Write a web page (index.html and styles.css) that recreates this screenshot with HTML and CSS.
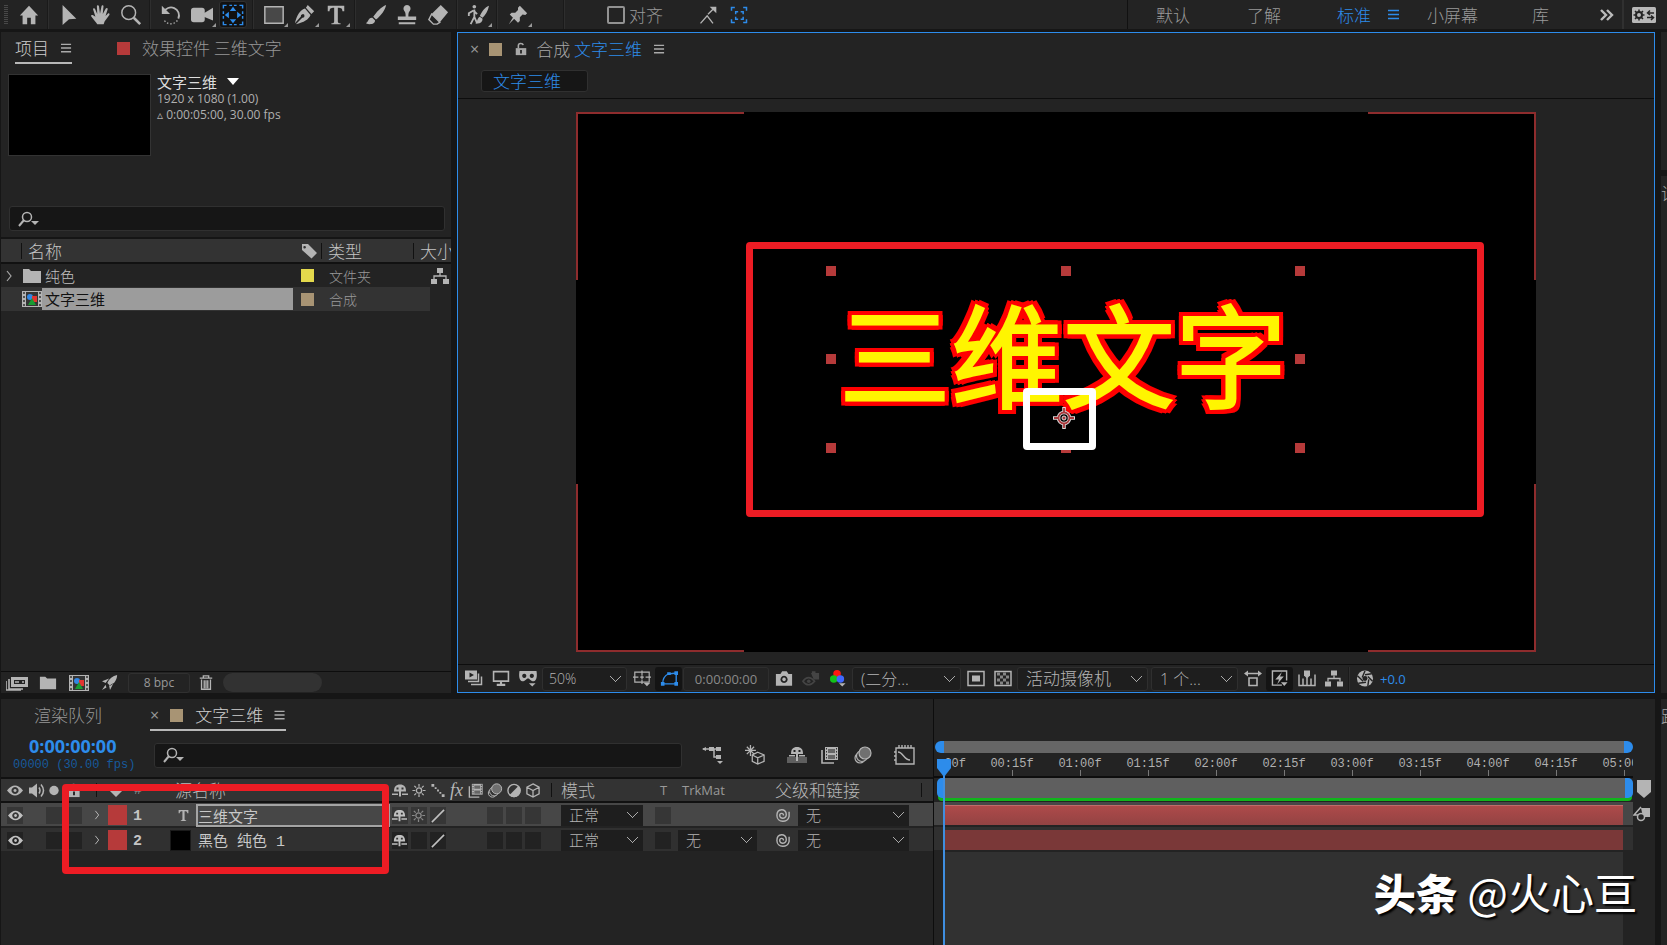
FILE: index.html
```html
<!DOCTYPE html>
<html lang="zh-CN">
<head>
<meta charset="utf-8">
<title>文字三维</title>
<link rel="stylesheet" href="styles.css">
</head>
<body>
<svg class="sprite" aria-hidden="true">
  <symbol id="home" viewBox="0 0 24 24"><path d="M12 2 22 12.500h-3V22h-5v-7h-4v7H5v-9.500H2z"/></symbol>
  <symbol id="arrow" viewBox="0 0 24 24"><path d="M5 1 20 16l-8 .6L5 23z"/></symbol>
  <symbol id="hand" viewBox="0 0 24 24"><path d="M9 22c-1-2-4-5-6.500-8.500-.8-1.200.8-2 2-1.100L7 14 4.500 6c-.4-1.500 1.600-2.100 2.100-.6L9 11 8.600 2.600c0-1.500 2.100-1.600 2.300-.1L12 10.500l1.700-8.300c.3-1.400 2.300-1.100 2.100.4L15 11l3.300-6c.8-1.300 2.500-.5 2 .9L18 13l2.500-2.500c1.200-1 2.500.3 1.700 1.500L17 19l-1 3z"/></symbol>
  <symbol id="zoom" viewBox="0 0 24 24"><g fill="none" stroke="currentColor"><circle cx="9.500" cy="9.500" r="7.500" stroke-width="1.600"/><path d="m15 15 7 7" stroke-width="2.800"/></g></symbol>
  <symbol id="rotate" viewBox="0 0 24 24"><path d="M4 9a8.500 8.500 0 1 1 16 7" fill="none" stroke="currentColor" stroke-width="2"/><path d="M2 2v9h9z"/><path d="M19 18c-4 5-11 5-15-1" fill="none" stroke="currentColor" stroke-width="1.500" stroke-dasharray="1.500 2.200"/></symbol>
  <symbol id="camera" viewBox="0 0 24 24"><rect x="0" y="4" width="15" height="16" rx="3"/><path d="M14 10 24 4v14l-10-4z"/></symbol>
  <symbol id="anchor" viewBox="0 0 24 24"><path d="M1.500 5V1.500H5m3 0h3m2 0h3m3 0h3.500V5m0 3v3m0 2v3m0 3v3.500H19m-3 0h-3m-2 0H8m-3 0H1.500V19m0-3v-3m0-2V8" fill="none" stroke="currentColor" stroke-width="1.600"/><path d="m12 3 3.500 4.500h-7zM12 21l3.500-4.500h-7zM3 12l4.500-3.500v7zM21 12l-4.500-3.500v7z"/></symbol>
  <symbol id="rect" viewBox="0 0 24 24"><path d="M2 3h20v18H2z" fill="#484848" stroke="currentColor" stroke-width="1.600"/></symbol>
  <symbol id="pen" viewBox="0 0 24 24"><path d="m15 1 7 7-3 3-6-7zM12 5l6 7c-2 5-7 8-16 10l7-7a2 2 0 1 0-1.500-1.500L1 21C3 13 6 7 12 5z"/></symbol>
  <symbol id="type" viewBox="0 0 24 24"><path d="M3 2h18v6h-2c0-3-1-4-5-4v15c0 1.500 1 2 3 2v1H7v-1c2 0 3-.5 3-2V4C6 4 5 5 5 8H3z"/></symbol>
  <symbol id="brush" viewBox="0 0 24 24"><path d="M23 1c-5 2-11 8-14 13l3 3C17 13 22 7 23 1zM8 15c-4-.5-4 4-7 6 4 2 10 1 10-3z"/></symbol>
  <symbol id="stamp" viewBox="0 0 24 24"><path d="M12 1a4 4 0 0 1 3 6.500c-1.500 1.500-1.500 3.500-1.500 6H22v4H2v-4h8.500c0-2.500 0-4.500-1.500-6A4 4 0 0 1 12 1zM3 20h18v2H3z"/></symbol>
  <symbol id="eraser" viewBox="0 0 24 24"><path d="m15 1 8 8-9 11-9-9z"/><path d="m5 11 9 9-3 2H7l-5-5z" fill="none" stroke="currentColor" stroke-width="1.500"/></symbol>
  <symbol id="roto" viewBox="0 0 24 24"><circle cx="8" cy="3" r="2"/><path d="m7 7-5 3v3m5-6 4 4M8 6v8l-4 8m4-8 3 7" fill="none" stroke="currentColor" stroke-width="2"/><path d="M24 2c-5 2-8 7-10 11l3 2c3-3 6-7 7-13zM14 14c-3 1-2 5-5 7 5 1 8-1 8-5z"/></symbol>
  <symbol id="pin" viewBox="0 0 24 24"><path d="m14 2 8 8-2 2-3-.5-3 3v4l-2 2-9-9 2-2h4l3-3V4zM9 15l-7 7 5.500-9z"/></symbol>
  <symbol id="snapline" viewBox="0 0 24 24"><path d="m3 22 8-9 7 9M12 11l6-6" fill="none" stroke="currentColor" stroke-width="1.600"/><path d="M14 2h8v8z"/></symbol>
  <symbol id="snapbox" viewBox="0 0 24 24"><path d="M3 7V3h4m10 0h4v4m0 10v4h-4M7 21H3v-4M8 11V8h3m3 0h3v3m0 3v3h-3m-3 0H8v-3" fill="none" stroke="currentColor" stroke-width="1.800"/></symbol>
  <symbol id="menu" viewBox="0 0 12 12"><path d="M0 1.500h11M0 5.500h11M0 9.500h11" fill="none" stroke="currentColor" stroke-width="1.500"/></symbol>
  <symbol id="more" viewBox="0 0 16 16"><path d="m2 3 5 5-5 5m6-10 5 5-5 5" fill="none" stroke="currentColor" stroke-width="2.400"/></symbol>
  <symbol id="prefs" viewBox="0 0 24 16"><rect width="24" height="16" rx="1.500"/><circle cx="7" cy="8" r="3" fill="none" stroke="#232323" stroke-width="2"/><path d="M7 2.500v2m0 7v2M1.500 8h2m7 0h2M3 4l1.500 1.500M11 4 9.500 5.500M3 12l1.500-1.500M11 12l-1.500-1.500M22 6h-6m2-2.500L15.500 6 18 8M15 10.500h6m-2-2 2.500 2-2.500 2.500" fill="none" stroke="#232323" stroke-width="1.500"/></symbol>
  <symbol id="lock" viewBox="0 0 16 16"><path d="M2 7h12v8H2z"/><path d="M5 7V4c0-3 5-3 5.500-.5" fill="none" stroke="currentColor" stroke-width="1.800"/><path d="M7 9h2v4H7z" fill="#222"/></symbol>
  <symbol id="search" viewBox="0 0 24 16"><g fill="none" stroke="currentColor"><circle cx="9" cy="6" r="4.500" stroke-width="1.500"/><path d="m6 9-5 6" stroke-width="2"/></g><path d="M13 10h8l-4 4z"/></symbol>
  <symbol id="tag" viewBox="0 0 16 16"><path d="M1 1h6l9 9-5.500 5.500L1 7zM4 3a1.300 1.300 0 1 0 0 2.500A1.300 1.300 0 0 0 4 3z" fill-rule="evenodd"/></symbol>
  <symbol id="tagdown" viewBox="0 0 16 16"><path d="M5 1h6l5 6-8 8-8-8zM8 2.500a1.300 1.300 0 1 0 .1 0z" fill-rule="evenodd"/></symbol>
  <symbol id="folder" viewBox="0 0 20 16"><path d="M1 1h6l2 2h10v12H1z"/></symbol>
  <symbol id="comp" viewBox="0 0 20 16"><path d="M0 0h20v16H0z"/><path d="M4 1h12v14H4z" fill="#343434"/><path d="M2 1v15M18 1v15" stroke="#333" stroke-width="1.500" stroke-dasharray="2 2"/><circle cx="8" cy="6" r="3" fill="#3287e4"/><path d="M10 5h5v6h-5z" fill="#e23430"/><path d="m10 7 4 7H6z" fill="#199b31"/></symbol>
  <symbol id="tree" viewBox="0 0 18 16"><path d="M6 0h6v5H6zM0 11h6v5H0zM12 11h6v5h-6z"/><path d="M9 5v3M3 11V8h12v3" fill="none" stroke="currentColor" stroke-width="1.300"/></symbol>
  <symbol id="footage" viewBox="0 0 22 16"><path d="M5 2h17v10H5z"/><path d="M8 5h11v4H8z" fill="#242424"/><path d="M9 7h4m3 0h2" stroke="currentColor" stroke-width="1.500"/><path d="M3 4v10h14M0 6v9h15" fill="none" stroke="currentColor" stroke-width="1.600"/></symbol>
  <symbol id="rocket" viewBox="0 0 18 18"><path d="M17 0c-5 1-9 4-11 9l3 3c5-2 8-7 8-12zM8 4 0 7l4 2zM13 9l-4 8-1-5zM4 11l-4 6 5-3z"/></symbol>
  <symbol id="trash" viewBox="0 0 16 18"><path d="M1 3.500h14M5 3V1h6v2M3 5v11h10V5M6 6v9m2-9v9m2-9v9" fill="none" stroke="currentColor" stroke-width="1.500"/></symbol>
  <symbol id="render" viewBox="0 0 18 16"><path d="M0 0h12v9H0z"/><path d="M4.500 2v5L9 4.500z" fill="#222"/><path d="M13.500 3v8H3M16.500 6v8H6" fill="none" stroke="currentColor" stroke-width="1.500"/></symbol>
  <symbol id="monitor" viewBox="0 0 16 16"><path d="M1 1.500h14v9H1z" fill="none" stroke="currentColor" stroke-width="1.500"/><path d="M7 11h2v2h3v2H4v-2h3z"/></symbol>
  <symbol id="mask" viewBox="0 0 20 18"><path d="M1 1h18c1 6 0 10-3 11-3 0-4-3-6-3s-3 3-6 3C1 11 0 7 1 1zM6 4a2.200 2.200 0 1 0 .1 0zM14 4a2.200 2.200 0 1 0 .1 0z" fill-rule="evenodd"/><path d="M11 14h7l-3.500 3.500z"/></symbol>
  <symbol id="grid" viewBox="0 0 20 18"><path d="M2 2h16v11H2zM10 0v5m0 5v5M0 7.500h6m8 0h6M8 7.500h4M10 5.500v4" fill="none" stroke="currentColor" stroke-width="1.300"/><path d="M12 14h7l-3.500 3.500z"/></symbol>
  <symbol id="shape" viewBox="0 0 20 18"><path d="M3 15c0-5 2-9 6-11l9-1v12z" fill="none" stroke="currentColor" stroke-width="1.500"/><path d="M1 13h4v4H1zM8 2h4v3H8zM16 1h4v4h-4zM16 13h4v4h-4z"/></symbol>
  <symbol id="photo" viewBox="0 0 20 16"><path d="M1 3h5l2-3h5l2 3h4v13H1zM10 5a4 4 0 1 0 .1 0zM10 7a2 2 0 1 0 .1 0z" fill-rule="evenodd"/></symbol>
  <symbol id="ghost" viewBox="0 0 20 18"><path d="M1 12q6-8 13 0-7 8-13 0z" fill="none" stroke="currentColor" stroke-width="1.800"/><circle cx="7.500" cy="12" r="2"/><path d="M10 3h9v7h-6zM11 1h4v2h-4z"/></symbol>
  <symbol id="rgb" viewBox="0 0 18 18"><circle cx="8" cy="4" r="4" fill="#ff1712"/><circle cx="4.500" cy="9.500" r="4" fill="#13c11a"/><circle cx="11.500" cy="9.500" r="4" fill="#4068ff"/><path d="M10 14h7l-3.500 3.500z"/></symbol>
  <symbol id="roi" viewBox="0 0 18 16"><path d="M1 1h16v14H1z" fill="none" stroke="currentColor" stroke-width="1.500"/><path d="M5 5h8v6H5z"/></symbol>
  <symbol id="checker" viewBox="0 0 18 16"><path d="M1 1h16v14H1z" fill="none" stroke="currentColor" stroke-width="1.500"/><path d="M3 2h3v3H3zM9 2h3v3H9zM6 5h3v3H6zM12 5h3v3h-3zM3 8h3v3H3zM9 8h3v3H9zM6 11h3v3H6zM12 11h3v3h-3z" fill="#858585"/></symbol>
  <symbol id="aspect" viewBox="0 0 18 16"><path d="M5 7.500h8V15H5zM2 3h14" fill="none" stroke="currentColor" stroke-width="1.600"/><path d="m0 3 4-3v6zM18 3l-4-3v6z"/></symbol>
  <symbol id="fast" viewBox="0 0 18 18"><path d="M16 11V1H1v15h10" fill="none" stroke="currentColor" stroke-width="1.500"/><path d="m11 2-7 8h4l-2 5 7-8H9zM10 13h7l-3.500 4z"/></symbol>
  <symbol id="timeline" viewBox="0 0 18 16"><path d="M1 4v11h16V4M5 8v7m4-8v8m4-7v7" fill="none" stroke="currentColor" stroke-width="1.500"/><path d="M6 0h6v5L9 8 6 5z"/></symbol>
  <symbol id="aperture" viewBox="0 0 18 18"><circle cx="9" cy="9" r="8.500"/><path d="M9 1 6 8m10-4-7 1m8 7-5-5m0 10 1-7M2 14l8-1M1 6l6 6" stroke="#232323" stroke-width="1.500"/><circle cx="9" cy="9" r="2.600" fill="#232323"/></symbol>
  <symbol id="flow" viewBox="0 0 22 18"><path d="M1 3h8m0 0h9M12 3v8h5" fill="none" stroke="currentColor" stroke-width="1.500"/><path d="m0 3 4-2v4zM7 1h5v4H7zM14 1h5v4h-5zM14 9h5v4h-5zM15 15h6l-3 3z"/></symbol>
  <symbol id="draft" viewBox="0 0 22 22"><path d="m14 8 7 3v7l-7 3-6-3v-7zM8 11l6 3 7-3M14 14v7M6 0v12M0 6h12M2 2l8 8m0-8-8 8" fill="none" stroke="currentColor" stroke-width="1.400"/></symbol>
  <symbol id="shy" viewBox="0 0 16 14"><path d="M2 8C2 3 4 1 8 1s6 2 6 7zM7 8h2v5H7zM0 10h6v1.500H0zM10 10h6v1.500h-6z"/><path d="M4.500 4h2v2h-2zM9.500 4h2v2h-2z" fill="#333"/></symbol>
  <symbol id="shybig" viewBox="0 0 22 18"><path d="M1 11h20v6H1z" fill="#5f5f5f"/><path d="M5 8c0-5 2-7 6-7s6 2 6 7zM10 8h2v7h-2zM3 9h6v1.500H3zM13 9h6v1.500h-6z"/><path d="M7.500 4h2v2h-2zM12.500 4h2v2h-2z" fill="#222"/></symbol>
  <symbol id="sun" viewBox="0 0 16 16"><circle cx="8" cy="8" r="2.800" fill="none" stroke="currentColor" stroke-width="1.400"/><path d="M8 1v3m0 8v3M1 8h3m8 0h3M3 3l2 2m6 6 2 2m0-10-2 2m-6 6-2 2" stroke="currentColor" stroke-width="1.300"/></symbol>
  <symbol id="dots" viewBox="0 0 16 16"><path d="M1 1h3v3H1zM4.500 4.500h2v2h-2zM7 7h2v2H7zM9.500 9.500h2v2h-2zM12 12h3v3h-3z"/></symbol>
  <symbol id="slash" viewBox="0 0 16 16"><path d="M2 15 15 2" stroke="currentColor" stroke-width="1.700"/></symbol>
  <symbol id="film" viewBox="0 0 18 18"><path d="M4 1h13v13H4z"/><path d="M7 3h7v4H7zM7 9h7v4H7z" fill="#666"/><path d="M5.500 2v12M15.500 2v12" stroke="#333" stroke-dasharray="1.500 1.500"/><path d="M1 4v13h12" fill="none" stroke="currentColor" stroke-width="1.600"/></symbol>
  <symbol id="blur" viewBox="0 0 18 18"><g fill="#333" stroke="currentColor" stroke-width="1.200"><circle cx="6" cy="12" r="5"/><circle cx="8" cy="10" r="5.500"/><circle cx="11" cy="7" r="6" fill="#707070"/></g></symbol>
  <symbol id="adjust" viewBox="0 0 16 16"><circle cx="8" cy="8" r="6.500" fill="none" stroke="currentColor" stroke-width="1.500"/><path d="M13 3A7 7 0 1 1 3 13z"/></symbol>
  <symbol id="cube" viewBox="0 0 16 16"><path d="m8 1 6.500 3.500v7L8 15l-6.500-3.500v-7zM1.500 4.500 8 8l6.500-3.500M8 8v7" fill="none" stroke="currentColor" stroke-width="1.400"/></symbol>
  <symbol id="graph" viewBox="0 0 22 20"><path d="M2 3h18v16H2zM4 7c5 0 6 8 12 8M5 0v3m3-3v3m3-3v3m3-3v3m3-3v3M0 7h2m-2 4h2m-2 4h2" fill="none" stroke="currentColor" stroke-width="1.400"/></symbol>
  <symbol id="eye" viewBox="0 0 16 12"><path d="M0 6q8-10 16 0-8 10-16 0zM8 2.500a3.500 3.500 0 1 0 .1 0zM8 4.500a1.500 1.500 0 1 0 .1 0z" fill-rule="evenodd"/></symbol>
  <symbol id="sound" viewBox="0 0 16 14"><path d="M0 4h3l5-4v14l-5-4H0z"/><path d="M10 4q2 3 0 6m2-9q5 6 0 12" fill="none" stroke="currentColor" stroke-width="1.500"/></symbol>
  <symbol id="dot" viewBox="0 0 16 16"><circle cx="8" cy="8" r="5"/></symbol>
  <symbol id="spiral" viewBox="0 0 16 16"><path d="M14.500 4v5c-1 7-13 7-13-1 0-8 10-8 10-1 0 5-7 5-7 1 0-3 4-3 4 0" fill="none" stroke="currentColor" stroke-width="1.500"/></symbol>
  <symbol id="chev" viewBox="0 0 8 12"><path d="m2 1 4 5-4 5" fill="none" stroke="currentColor" stroke-width="1.200"/></symbol>
  <symbol id="marker" viewBox="0 0 14 18"><path d="M0 0h14v12l-7 6-7-6z"/></symbol>
  <symbol id="keys" viewBox="0 0 18 16"><path d="M8 2h9v9h-7z"/><path d="M8 1 1 9h5" fill="none" stroke="currentColor" stroke-width="1.500"/><circle cx="8" cy="11" r="3.500" fill="#262626" stroke="currentColor" stroke-width="1.500"/></symbol>
  <symbol id="target" viewBox="0 0 22 22"><g fill="none" stroke="#ddd" stroke-width="3.500"><circle cx="11" cy="11" r="5.500"/><path d="M11 0v6m0 10v6M0 11h6m10 0h6"/></g><g fill="none" stroke="#a8393c" stroke-width="1.800"><circle cx="11" cy="11" r="5.500"/><path d="M11 1v5m0 10v5M1 11h5m10 0h5"/></g><circle cx="11" cy="11" r="2" fill="#a8393c" stroke="#ddd"/></symbol>
</svg>

<header class="toolbar">
  <span class="grip"></span>
  <button class="tool" aria-label="主页"><svg><use href="#home"/></svg></button>
  <i class="sep"></i>
  <button class="tool" aria-label="选取"><svg><use href="#arrow"/></svg></button>
  <button class="tool" aria-label="手形"><svg><use href="#hand"/></svg></button>
  <button class="tool" aria-label="缩放"><svg><use href="#zoom"/></svg></button>
  <i class="sep"></i>
  <button class="tool" aria-label="旋转"><svg><use href="#rotate"/></svg></button>
  <button class="tool more" aria-label="摄像机"><svg><use href="#camera"/></svg></button>
  <button class="tool on" aria-label="锚点"><svg><use href="#anchor"/></svg></button>
  <i class="sep"></i>
  <button class="tool more" aria-label="矩形"><svg><use href="#rect"/></svg></button>
  <button class="tool more" aria-label="钢笔"><svg><use href="#pen"/></svg></button>
  <button class="tool more" aria-label="文字"><svg><use href="#type"/></svg></button>
  <i class="sep"></i>
  <button class="tool" aria-label="画笔"><svg><use href="#brush"/></svg></button>
  <button class="tool" aria-label="图章"><svg><use href="#stamp"/></svg></button>
  <button class="tool" aria-label="橡皮擦"><svg><use href="#eraser"/></svg></button>
  <i class="sep"></i>
  <button class="tool more" aria-label="Roto 笔刷"><svg class="roto"><use href="#roto"/></svg></button>
  <i class="sep"></i>
  <button class="tool more" aria-label="操控点"><svg><use href="#pin"/></svg></button>
  <i class="sep sep-far"></i>
  <label class="snap"><input type="checkbox">对齐</label>
  <button class="tool small" aria-label="对齐边缘"><svg><use href="#snapline"/></svg></button>
  <button class="tool small blue" aria-label="对齐框"><svg><use href="#snapbox"/></svg></button>
  <nav class="workspaces">
    <a href="#a">默认</a><a href="#b">了解</a><a href="#c" class="current">标准 <svg><use href="#menu"/></svg></a><a href="#d">小屏幕</a><a href="#e">库</a>
    <button class="overflow" aria-label="更多"><svg><use href="#more"/></svg></button>
    <button class="prefs" aria-label="设置"><svg><use href="#prefs"/></svg></button>
  </nav>
</header>

<main class="upper">
  <section class="panel project">
    <div class="tabs">
      <a href="#p" class="tab active">项目<svg class="burger"><use href="#menu"/></svg></a>
      <a href="#q" class="tab effects"><i class="chip red"></i>效果控件 三维文字</a>
    </div>
    <div class="summary">
      <div class="thumb"></div>
      <div class="info"><b>文字三维<i class="tri"></i></b><span>1920 x 1080 (1.00)</span><span>▵ 0:00:05:00, 30.00 fps</span></div>
    </div>
    <div class="search"><svg><use href="#search"/></svg><input type="text" aria-label="搜索项目"></div>
    <table class="files">
      <colgroup><col class="c-name"><col class="c-tag"><col class="c-type"><col class="c-size"></colgroup>
      <thead><tr><th><span class="bar">名称</span></th><th><svg class="tag"><use href="#tag"/></svg></th><th><span class="bar tight">类型</span></th><th><span class="bar tight">大小</span></th></tr></thead>
      <tbody>
        <tr><td><div class="file"><svg class="tw"><use href="#chev"/></svg><svg class="fi"><use href="#folder"/></svg><span>纯色</span></div></td><td><i class="chip yellow"></i></td><td class="kind">文件夹</td><td><svg class="net"><use href="#tree"/></svg></td></tr>
        <tr class="sel"><td><div class="file"><i class="tw"></i><svg class="fi"><use href="#comp"/></svg><span class="hot">文字三维</span></div></td><td><i class="chip tan"></i></td><td class="kind">合成</td><td class="edge"></td></tr>
      </tbody>
    </table>
    <footer class="pfoot">
      <button aria-label="解释素材"><svg class="w22"><use href="#footage"/></svg></button>
      <button aria-label="新建文件夹"><svg><use href="#folder"/></svg></button>
      <button aria-label="新建合成"><svg class="w22"><use href="#comp"/></svg></button>
      <button aria-label="项目设置"><svg><use href="#rocket"/></svg></button>
      <button class="bpc">8 bpc</button>
      <button class="bin" aria-label="删除"><svg><use href="#trash"/></svg></button>
      <span class="hscroll"></span>
    </footer>
  </section>

  <section class="panel viewer">
    <div class="vtabs"><button class="x" aria-label="关闭">×</button><i class="chip tan"></i><svg class="lock"><use href="#lock"/></svg><span>合成 <em>文字三维</em></span><svg class="burger"><use href="#menu"/></svg></div>
    <div class="crumbs"><button>文字三维</button></div>
    <div class="stage">
      <div class="canvas">
        <i class="corner tl"></i><i class="corner tr"></i><i class="corner bl"></i><i class="corner br"></i>
        <div class="title">三维文字</div>
        <div class="bounds"><i></i><i></i><i></i><i></i><i class="void"></i><i></i><i></i><i></i><i></i></div>
        <div class="note big"></div>
        <div class="note white"><svg><use href="#target"/></svg></div>
      </div>
    </div>
    <footer class="vfoot">
      <button aria-label="始终预览"><svg><use href="#render"/></svg></button>
      <button aria-label="主查看器"><svg><use href="#monitor"/></svg></button>
      <button aria-label="VR"><svg class="w20"><use href="#mask"/></svg></button>
      <select class="s50" aria-label="缩放"><option>50%</option></select>
      <button aria-label="网格"><svg><use href="#grid"/></svg></button>
      <button class="on" aria-label="蒙版"><svg><use href="#shape"/></svg></button>
      <button class="time">0:00:00:00</button>
      <button aria-label="快照"><svg><use href="#photo"/></svg></button>
      <button class="dim" aria-label="显示快照"><svg><use href="#ghost"/></svg></button>
      <button aria-label="通道"><svg><use href="#rgb"/></svg></button>
      <select class="sres" aria-label="分辨率"><option>(二分...</option></select>
      <button aria-label="目标区域"><svg><use href="#roi"/></svg></button>
      <button aria-label="透明网格"><svg><use href="#checker"/></svg></button>
      <select class="scam" aria-label="3D 视图"><option>活动摄像机</option></select>
      <select class="sview" aria-label="视图布局"><option>1 个...</option></select>
      <button aria-label="像素长宽比"><svg><use href="#aspect"/></svg></button>
      <button class="on plain" aria-label="快速预览"><svg><use href="#fast"/></svg></button>
      <button aria-label="时间轴"><svg><use href="#timeline"/></svg></button>
      <button aria-label="流程图"><svg><use href="#tree"/></svg></button>
      <i class="sep"></i>
      <button aria-label="曝光"><svg><use href="#aperture"/></svg></button>
      <a href="#exp" class="exp">+0.0</a>
    </footer>
  </section>
  <aside class="side"><div class="panel short"></div><div class="panel tall">设</div></aside>
</main>

<div class="lower">
  <section class="panel timeline">
    <div class="left">
      <div class="tabs">
        <a href="#r" class="tab queue">渲染队列</a>
        <a href="#t" class="tab active comp"><span class="x">×</span><i class="chip tan"></i>文字三维<svg class="burger"><use href="#menu"/></svg></a>
      </div>
      <div class="controls">
        <div class="clock"><b>0:00:00:00</b><span>00000 (30.00 fps)</span></div>
        <div class="search"><svg><use href="#search"/></svg><input type="text" aria-label="搜索图层"></div>
        <div class="tlicons">
          <button aria-label="迷你流程图"><svg><use href="#flow"/></svg></button><button aria-label="草图 3D"><svg><use href="#draft"/></svg></button><button aria-label="隐藏"><svg><use href="#shybig"/></svg></button><button aria-label="帧混合"><svg><use href="#film"/></svg></button><button aria-label="运动模糊"><svg><use href="#blur"/></svg></button><button aria-label="图表"><svg><use href="#graph"/></svg></button>
        </div>
      </div>
      <div class="row head">
        <svg><use href="#eye"/></svg><svg><use href="#sound"/></svg><svg><use href="#dot"/></svg><svg><use href="#lock"/></svg><i class="tick"></i><svg class="td"><use href="#tagdown"/></svg><span class="num">#</span><span class="src">源名称</span>
        <svg><use href="#shy"/></svg><svg><use href="#sun"/></svg><svg><use href="#dots"/></svg><span class="fx">fx</span><svg><use href="#film"/></svg><svg><use href="#blur"/></svg><svg><use href="#adjust"/></svg><svg><use href="#cube"/></svg>
        <i class="tick"></i><span>模式</span><span class="lat mid">T</span><span class="lat">TrkMat</span><span class="par">父级和链接</span><i class="tick"></i>
      </div>
      <div class="row layer lit">
        <b class="box"><svg><use href="#eye"/></svg></b><i></i><i class="box"></i><i class="box"></i><svg class="tw"><use href="#chev"/></svg><i class="label"></i><b class="num">1</b><svg class="ti"><use href="#type"/></svg><span class="name edit">三维文字</span>
        <i class="box"><svg><use href="#shy"/></svg></i><i class="box faint"><svg><use href="#sun"/></svg></i><i class="box"><svg><use href="#slash"/></svg></i><i></i><i></i><i class="box"></i><i class="box"></i><i class="box"></i>
        <i></i><select aria-label="模式"><option>正常</option></select><i class="box"></i><i></i><svg class="sp"><use href="#spiral"/></svg><select aria-label="父级"><option>无</option></select><i></i>
      </div>
      <div class="row layer">
        <b class="box"><svg><use href="#eye"/></svg></b><i></i><i class="box"></i><i class="box"></i><svg class="tw"><use href="#chev"/></svg><i class="label"></i><b class="num">2</b><i class="solid"></i><span class="name">黑色 纯色 1</span>
        <i class="box"><svg><use href="#shy"/></svg></i><i class="box"></i><i class="box"><svg><use href="#slash"/></svg></i><i></i><i></i><i class="box"></i><i class="box"></i><i class="box"></i>
        <i></i><select aria-label="模式"><option>正常</option></select><i class="box"></i><select class="trk" aria-label="轨道遮罩"><option>无</option></select><svg class="sp"><use href="#spiral"/></svg><select aria-label="父级"><option>无</option></select><i></i>
      </div>
      <div class="note list"></div>
    </div>
    <div class="right">
      <div class="navbar"></div>
      <div class="ruler"><span class="first">00f</span><span>00:15f</span><span>01:00f</span><span>01:15f</span><span>02:00f</span><span>02:15f</span><span>03:00f</span><span>03:15f</span><span>04:00f</span><span>04:15f</span><span>05:00f</span></div>
      <div class="work"></div>
      <svg class="mk"><use href="#marker"/></svg>
      <div class="tracks"><div class="track lit"><i></i></div><div class="track"><i></i></div><div class="rest"></div></div>
      <svg class="ky"><use href="#keys"/></svg>
      <div class="playhead"></div>
      <div class="watermark"><b>头条</b> @火心亘</div>
    </div>
  </section>
  <aside class="panel tail">跟</aside>
</div>
</body>
</html>
```
FILE: styles.css
```css
* { box-sizing: border-box; }
body {
  margin: 0;
  height: 100vh;
  display: flex;
  flex-direction: column;
  overflow: hidden;
  background: #161616;
  color: #a8a8a8;
  font: 300 17px/20px "Noto Sans CJK SC", sans-serif;
}
i, em { font-style: normal; }
a { color: inherit; text-decoration: none; }
button { padding: 0; border: 0; background: none; color: inherit; font: inherit; }
svg { display: block; fill: currentColor; flex: none; }
.sprite { position: absolute; width: 0; height: 0; }
.panel { background: #232323; }

/* toolbar */
.toolbar { display: flex; align-items: center; height: 29px; flex: none; margin-bottom: 3px; padding-left: 4px; background: #232323; }
.grip { width: 4px; height: 20px; margin-right: 5px; background: repeating-linear-gradient(#484848 0 1px, #232323 1px 2px); }
.tool { position: relative; width: 31px; height: 27px; display: grid; place-items: center; color: #b4b4b4; }
.tool svg { width: 22px; height: 22px; }
.tool svg.roto { width: 26px; height: 22px; }
.tool.on { color: #2d8ceb; background: #111; border: 1px solid #303030; border-radius: 3px; width: 28px; margin: 0 2px; }
.tool.more::after { content: ""; position: absolute; right: 1px; bottom: 1px; border: 2px solid; border-color: transparent #999 #999 transparent; }
.tool.small svg { width: 20px; height: 20px; }
.tool.blue { color: #2d8ceb; }
.sep { width: 2px; height: 26px; background: #1a1a1a; border-right: 1px solid #2e2e2e; flex: none; }
.toolbar > .sep { height: 29px; margin: 0 4px 0 3px; }
.toolbar > .sep-far { margin: 0 42px 0 30px; }
.snap { display: flex; align-items: center; gap: 4px; margin-right: 29px; color: #999; }
.snap input { appearance: none; width: 18px; height: 18px; margin: 0; border: 2px solid #929292; border-radius: 2px; }
.workspaces { display: flex; align-items: center; align-self: stretch; margin-left: auto; padding-left: 28px; border-left: 1px solid #111; color: #999; }
.workspaces a { display: flex; align-items: center; gap: 17px; margin-right: 57px; }
.workspaces a:nth-child(2) { margin-right: 56px; }
.workspaces a:nth-child(3) { margin-right: 27px; color: #2d8ceb; }
.workspaces a:nth-child(4) { margin-right: 54px; }
.workspaces a:nth-child(5) { margin-right: 50px; }
.workspaces a svg { width: 12px; height: 12px; }
.overflow { color: #bbb; }
.overflow svg { width: 16px; height: 16px; }
.prefs { display: flex; align-items: center; align-self: stretch; margin: 0 11px 0 7px; padding-left: 8px; border-left: 2px solid #303030; color: #b8b8b8; }
.prefs svg { width: 24px; height: 16px; }

/* shared pieces */
.upper { flex: 1; min-height: 0; display: flex; gap: 6px; padding-left: 1px; }
.tabs { display: flex; height: 32px; }
.tab { display: flex; align-items: center; color: #969696; }
.tab.active { padding-top: 2px; color: #cfcfcf; border-bottom: 2px solid #b8b8b8; }
.burger { width: 11px; height: 11px; color: #aaa; }
.chip { display: inline-block; width: 13px; height: 13px; flex: none; }
.red { background: #b63a3a; }
.tan { background: #a89474; }
.yellow { background: #e4d94c; }
.x { color: #999; font: 16px/16px "Open Sans", sans-serif; }
.search { display: flex; align-items: center; height: 25px; padding-left: 8px; border: 1px solid #303030; border-radius: 3px; background: #161616; color: #b4b4b4; }
.search svg { width: 24px; height: 16px; }
.search input { flex: 1; min-width: 0; border: 0; outline: 0; background: none; color: #ccc; }
select {
  appearance: none;
  border: 1px solid #2f2f2f;
  border-radius: 3px;
  padding: 0 8px;
  background: #1e1e1e;
  color: #b4b4b4;
  font: 300 16px/20px "Open Sans", "Noto Sans CJK SC", sans-serif;
  background-image: linear-gradient(45deg, transparent 45%, #aaa 45% 58%, transparent 58%), linear-gradient(-45deg, transparent 45%, #aaa 45% 58%, transparent 58%);
  background-size: 6px 6px, 6px 6px;
  background-position: right 10px center, right 5px center;
  background-repeat: no-repeat;
}

/* project */
.project { width: 450px; flex: none; display: flex; flex-direction: column; overflow: hidden; }
.project .tab.active { margin-left: 14px; gap: 12px; width: 57px; }
.project .effects { margin-left: 45px; gap: 12px; }
.summary { display: flex; gap: 6px; padding: 10px 7px; }
.thumb { width: 143px; height: 82px; background: #000; border: 1px solid #333; }
.info { display: flex; flex-direction: column; font: 12px/16px "Open Sans", "DejaVu Sans", sans-serif; color: #b0b0b0; }
.info b { display: flex; align-items: center; gap: 10px; padding-bottom: 2px; font: 400 15px/15px "Noto Sans CJK SC", sans-serif; color: #dedede; }
.tri { border: 6px solid transparent; border-top: 7px solid #fff; border-bottom: 0; }
.project .search { margin: 40px 6px 6px 8px; }
.files { width: 100%; table-layout: fixed; border-collapse: collapse; }
.c-name { width: 294px; } .c-tag { width: 26px; } .c-type { width: 92px; }
.files th { height: 25px; padding: 0; text-align: left; font-weight: 300; color: #c4c4c4; background: #333; border-top: 2px solid #151515; border-bottom: 2px solid #111; white-space: nowrap; overflow: hidden; }
.bar { display: block; margin-left: 20px; padding-left: 6px; border-left: 1px solid #111; line-height: 16px; }
.bar.tight { margin-left: 0; }
.tag { width: 16px; height: 16px; margin-left: 6px; color: #b4b4b4; }
.files td { height: 24px; padding: 0; font-size: 15px; vertical-align: middle; }
.files td:nth-child(2) { padding-left: 6px; line-height: 0; }
.files .kind { padding-left: 8px; color: #999; font-size: 14px; }
.sel td:not(:last-child) { background: #333; }
.sel .edge { background: linear-gradient(#333, #333) left / 17px 100% no-repeat; }
.file { display: flex; align-items: center; height: 22px; }
.file .tw { width: 8px; height: 12px; margin: 0 9px 0 4px; }
.file .fi { width: 20px; height: 16px; color: #b4b4b4; }
.file span { flex: 1; padding-left: 3px; line-height: 22px; color: #c0c0c0; }
.file .hot { margin-right: 2px; background: #9c9c9c; color: #111; font-weight: 400; }
.net { width: 18px; height: 16px; margin-left: 18px; color: #b4b4b4; }
.pfoot { display: flex; align-items: center; margin-top: auto; height: 22px; border-top: 1px solid #0d0d0d; color: #b4b4b4; }
.pfoot button { display: grid; place-items: center; width: 31px; }
.pfoot svg { width: 18px; height: 16px; }
.pfoot svg.w22 { width: 22px; }
.pfoot .bpc { width: 62px; height: 20px; margin: 0 2px 0 3px; border: 1px solid #303030; border-radius: 3px; font: 12px/18px "Open Sans", sans-serif; color: #999; }
.pfoot .bin { width: 28px; margin-right: 3px; }
.hscroll { width: 99px; height: 19px; border-radius: 10px; background: #323232; }

/* viewer */
.viewer { flex: 1; min-width: 0; display: flex; flex-direction: column; border: 1px solid #2d8ceb; }
.vtabs { display: flex; align-items: center; height: 32px; padding-left: 12px; }
.vtabs .chip { margin-left: 10px; }
.vtabs .lock { width: 14px; height: 14px; margin: 0 8px 0 12px; }
.vtabs .burger { margin-left: 12px; }
.vtabs em { color: #2d8ceb; }
.crumbs { height: 34px; padding: 5px 23px; border-bottom: 1px solid #0d0d0d; }
.crumbs button { width: 107px; height: 22px; padding-left: 11px; text-align: left; background: #161616; border: 1px solid #303030; border-radius: 3px; color: #2d8ceb; line-height: 18px; }
.stage { flex: 1; display: grid; place-items: center; min-height: 0; }
.canvas { position: relative; width: 960px; height: 540px; background: #000; }
.corner { position: absolute; width: 168px; height: 168px; border: 0 solid #8e2c2d; }
.tl { top: 0; left: 0; border-width: 2px 0 0 2px; }
.tr { top: 0; right: 0; border-width: 2px 2px 0 0; }
.bl { bottom: 0; left: 0; border-width: 0 0 2px 2px; }
.br { bottom: 0; right: 0; border-width: 0 2px 2px 0; }
.title {
  position: absolute; left: 263px; top: 183px; white-space: nowrap;
  font: 400 112px/112px "Noto Sans CJK SC", sans-serif;
  color: #fff500; -webkit-text-stroke: 2px #fff500;
  filter: drop-shadow(4px 0 0 #f00) drop-shadow(-4px 0 0 #f00) drop-shadow(0 4px 0 #f00) drop-shadow(0 -4px 0 #f00);
}
.bounds { position: absolute; left: 250px; top: 154px; width: 479px; height: 187px; display: grid; grid-template-columns: repeat(3, 10px); align-content: space-between; justify-content: space-between; }
.bounds i { width: 10px; height: 10px; background: #b63a3a; }
.bounds .void { background: none; }
.note { position: absolute; border: 7px solid #ed1c24; border-radius: 4px; }
.note.big { left: 170px; top: 130px; width: 738px; height: 275px; }
.note.white { left: 447px; top: 276px; width: 73px; height: 62px; border-color: #fff; display: grid; place-items: center; padding: 0 0 2px 8px; }
.note.white svg { width: 22px; height: 22px; }
.vfoot { display: flex; align-items: center; height: 28px; padding-left: 2px; border-top: 1px solid #0d0d0d; color: #b4b4b4; }
.vfoot > * { flex: none; }
.vfoot button { width: 27px; height: 24px; display: grid; place-items: center; }
.vfoot button svg { width: 18px; height: 17px; }
.vfoot button svg.w20 { width: 20px; }
.vfoot select { height: 24px; margin: 0 1px; font-size: 14px; }
.vfoot .s50 { width: 85px; padding: 0 6px; }
.vfoot .sres { width: 109px; font-size: 16px; }
.vfoot .scam { width: 131px; font-size: 17px; }
.vfoot .sview { width: 87px; margin-left: 2px; font-size: 16px; }
.vfoot .on { color: #2d8ceb; background: #141414; border-radius: 3px; }
.vfoot .on.plain { color: #b4b4b4; }
.vfoot .time { width: 86px; margin: 0 1px; border: 1px solid #2e2e2e; border-radius: 3px; font: 13px/20px "Open Sans", sans-serif; color: #8a8a8a; }
.vfoot .dim { color: #444; }
.vfoot .sep { height: 24px; margin: 0 1px; }
.exp { margin-left: 2px; font: 13px/20px "Open Sans", sans-serif; color: #2d8ceb; }
.side { width: 6px; display: flex; flex-direction: column; gap: 6px; overflow: hidden; }
.short { height: 138px; }
.tall { flex: 1; padding-top: 7px; overflow: hidden; }

/* timeline */
.lower { display: flex; gap: 6px; height: 246px; margin-top: 6px; padding-left: 1px; flex: none; }
.tail { width: 6px; overflow: hidden; padding-top: 7px; }
.timeline { flex: 1; min-width: 0; display: grid; grid-template-columns: 933px 1fr; }
.left { position: relative; border-right: 1px solid #0d0d0d; }
.queue { margin-left: 33px; }
.comp { margin-left: 48px; }
.comp .chip { margin: 0 12px 0 11px; }
.comp .burger { margin-left: 11px; width: 12px; }
.controls { display: flex; align-items: center; height: 46px; padding: 2px 0 0 12px; }
.clock { flex: none; width: 141px; color: #2d8ceb; }
.clock b { display: block; padding: 0 0 0 16px; font: 700 18px/20px "Open Sans", sans-serif; }
.clock span { display: block; font: 12px/18px "Liberation Mono", monospace; color: #165a9c; white-space: nowrap; }
.controls .search { flex: none; width: 528px; }
.tlicons { display: flex; align-items: center; margin-left: 20px; color: #b4b4b4; }
.tlicons button { width: 22px; margin-right: 20px; display: grid; place-items: center; }
.tlicons button:last-child { margin-right: 0; }
.tlicons svg { width: 22px; height: 20px; }
.tlicons button:nth-child(n+3):nth-child(-n+4) { margin-right: 11px; }
.tlicons button:nth-child(5) svg, .tlicons button:nth-child(4) svg { width: 18px; }
.row { display: grid; grid-template-columns: 28px 15px 19px 22px 23px 22px 40px 26px 194px repeat(8, 19px) 19px 89px 26px 93px 28px 113px 1fr; align-items: center; height: 25px; background: #303030; border-bottom: 2px solid #232323; }
.row > svg { justify-self: center; width: 16px; height: 15px; color: #b4b4b4; }
.row.head { background: #333; border-top: 2px solid #111; border-bottom-color: #111; color: #b8b8b8; height: 26px; line-height: 22px; }
.row > svg.td { justify-self: start; }
.head .src { grid-column: span 2; padding-left: 5px; }
.num { padding: 2px 0 0 4px; font: 15px/20px "Liberation Mono", monospace; color: #c4c4c4; }
b.num { padding: 4px 0 0 3px; font-weight: 700; }
.head .num { font-size: 13px; color: #999; }
.fx { justify-self: center; font: italic 18px/18px "Liberation Serif", serif; }
.tick { justify-self: center; width: 1px; height: 14px; background: #111; }
.lat { padding-left: 6px; font: 13px/20px "Open Sans", sans-serif; color: #999; }
.lat.mid { padding-left: 10px; }
.par { grid-column: span 2; padding-left: 6px; }
.row.lit { background: #474747; }
.layer .box { display: grid; place-items: center; justify-self: center; width: 16px; height: 17px; background: #222; color: #c0c0c0; }
.layer.lit .box { background: #363636; }
.box svg { width: 15px; height: 15px; }
.faint svg { opacity: .6; }
.row > svg.tw { width: 8px; height: 10px; }
.label { width: 19px; height: 20px; background: #b63a3a; }
.row > svg.ti { width: 13px; height: 15px; }
.solid { width: 21px; height: 21px; background: #000; border: 1px solid #1a1a1a; }
.name { height: 23px; padding-left: 2px; font: 400 15px/28px "Liberation Mono", "Noto Sans CJK SC", monospace; color: #c8c8c8; }
.name.edit { border: 2px solid #a4a4a4; padding-left: 0; line-height: 26px; }
.layer select { height: 21px; border: 0; border-radius: 0; width: 82px; font-size: 15px; }
.layer select.trk { width: 79px; margin-left: 2px; }
.layer svg + select { width: 111px; margin-left: 1px; }
.note.list { left: 61px; top: 85px; width: 327px; height: 90px; }

/* time area */
.right { position: relative; min-width: 0; display: grid; grid-template-columns: 1fr 22px; grid-template-rows: 42px 37px 24px 1fr; overflow: hidden; }
.navbar { grid-column: 1; align-self: end; height: 12px; margin: 0 0 -12px 1px; border: solid #2d8ceb; border-width: 0 9px; border-radius: 6px; background: #666; }
.ruler { grid-column: 1; grid-row: 2; display: grid; grid-template-columns: repeat(10, minmax(0, 1fr)) 9px; padding: 13px 0 0 10px; border-bottom: 2px solid #0d0d0d; overflow: hidden; font: 12px/20px "Liberation Mono", monospace; color: #b0b0b0; }
.ruler span { width: 44px; height: 22px; margin-left: -22px; text-align: center; background: linear-gradient(#777, #777) 22px bottom / 1px 6px no-repeat; }
.ruler .first { text-align: right; }
.work { grid-column: 1; grid-row: 3; height: 20px; margin-left: 3px; border: solid #2d8ceb; border-width: 0 8px; border-radius: 5px; background: #5f5f5f; box-shadow: 0 4px 0 -1px #12b41c; }
.mk { grid-column: 2; grid-row: 3; width: 14px; height: 18px; margin: 2px 0 0 4px; color: #b4b4b4; }
.tracks { grid-column: 1; grid-row: 4; display: flex; flex-direction: column; }
.track { height: 25px; padding: 3px 10px 2px 10px; background: #303030; border-bottom: 2px solid #232323; }
.track.lit { background: #474747; }
.track i { display: block; height: 20px; background: #7a3838; }
.track.lit i { background: linear-gradient(#ae4a4a, #934343); border-top: 1px solid #c06a6a; }
.rest { flex: 1; margin: 0 10px; background: #313131; }
.ky { grid-column: 2; grid-row: 4; width: 18px; height: 16px; margin-top: 4px; color: #b4b4b4; }
.playhead { position: absolute; left: 9px; top: 74px; bottom: 0; width: 2px; background: #3f8ee0; }
.playhead::before { content: ""; position: absolute; left: -6px; top: -14px; width: 14px; height: 18px; background: #2d8ceb; clip-path: polygon(0 0, 100% 0, 100% 50%, 50% 100%, 0 50%); }
.watermark { position: absolute; right: 18px; bottom: 25px; white-space: nowrap; color: #fff; font: 400 43px/56px "Noto Sans CJK SC", sans-serif; text-shadow: 2px 2px 2px #000; }
.watermark b { font-weight: 900; font-size: 42px; }
```
